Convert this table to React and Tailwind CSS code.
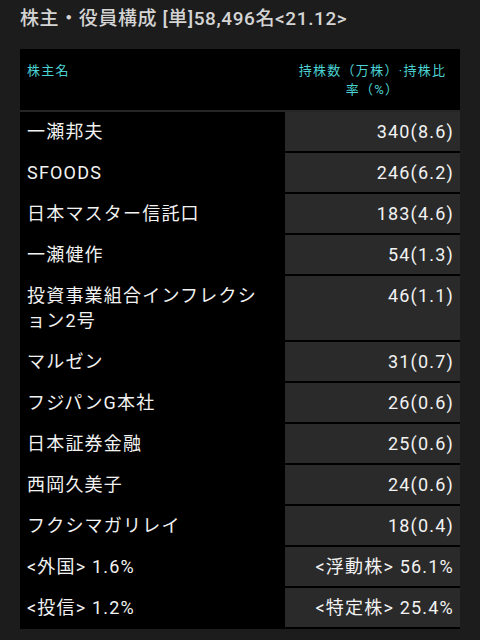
const ROWS = [
    { name: '一瀬邦夫', value: '340(8.6)' },
    { name: 'SFOODS', value: '246(6.2)' },
    { name: '日本マスター信託口', value: '183(4.6)' },
    { name: '一瀬健作', value: '54(1.3)' },
    { name: '投資事業組合インフレクション2号', value: '46(1.1)' },
    { name: 'マルゼン', value: '31(0.7)' },
    { name: 'フジパンG本社', value: '26(0.6)' },
    { name: '日本証券金融', value: '25(0.6)' },
    { name: '西岡久美子', value: '24(0.6)' },
    { name: 'フクシマガリレイ', value: '18(0.4)' },
    { name: '<外国> 1.6%', value: '<浮動株> 56.1%' },
    { name: '<投信> 1.2%', value: '<特定株> 25.4%' },
];

export default function App() {
    return (
        <div
            className="w-[480px] h-[640px] bg-[#1c1c1c] overflow-hidden [text-spacing-trim:space-all]"
            style={{ fontFamily: 'Roboto, "Noto Sans CJK JP", sans-serif' }}
        >
            {/* Title */}
            <h1 className="px-5 pt-[5px] h-[49px] text-[19px] leading-[28px] tracking-[0.6px] font-medium text-[#d4d4d4]">
                株主・役員構成 [単]58,496名&lt;21.12&gt;
            </h1>

            {/* Table */}
            <div className="mx-5 bg-black pb-[2px]">
                <div className="flex h-[63px] border-b-2 border-[#262626] text-[13px] leading-[19px] tracking-[1.3px] text-[#4bd2d2]">
                    <div className="w-[265px] pl-[7px] pt-[12px]">株主名</div>
                    <div className="flex-1 pt-[12px] px-3 text-center">持株数（万株）·持株比率（%）</div>
                </div>
                <div className="flex flex-col gap-[2px] text-[18px] leading-[25px] tracking-[1.2px] text-[#f2f2f2]">
                    {ROWS.map((row) => (
                        <div key={row.name} className="flex">
                            <div className="w-[265px] pl-[7px] pr-[20px] py-[7px]">{row.name}</div>
                            <div className="flex-1 bg-[#2a2a2a] pr-[6px] py-[7px] text-right">{row.value}</div>
                        </div>
                    ))}
                </div>
            </div>
        </div>
    );
}
